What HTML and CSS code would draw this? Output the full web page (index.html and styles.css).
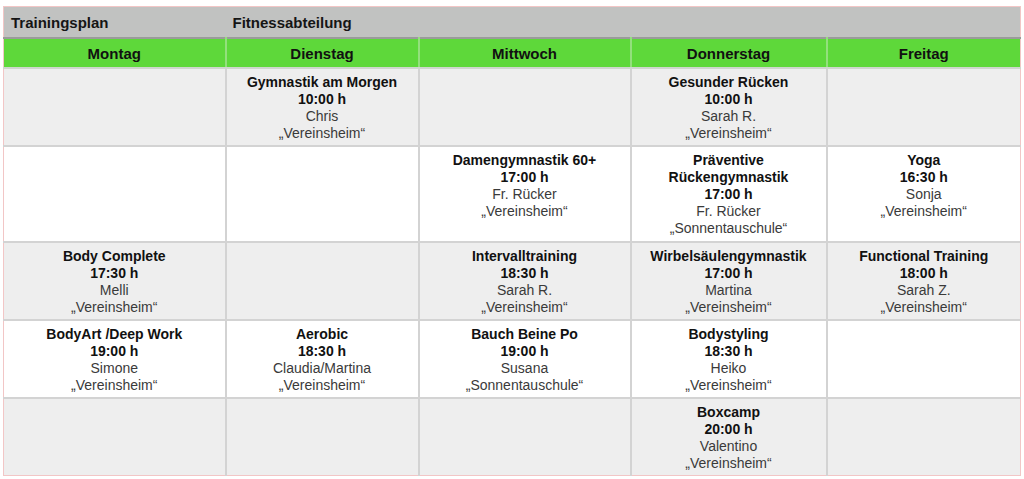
FILE: index.html
```html
<!DOCTYPE html>
<html lang="de">
<head>
<meta charset="utf-8">
<title>Trainingsplan Fitnessabteilung</title>
<link rel="stylesheet" href="styles.css">
</head>
<body>
<table class="plan">
  <colgroup>
    <col class="c1"><col class="c2"><col class="c3"><col class="c4"><col class="c5">
  </colgroup>
  <thead>
    <tr class="title-row">
      <th class="title">Trainingsplan</th>
      <th class="title" colspan="4">Fitnessabteilung</th>
    </tr>
    <tr class="days">
      <th>Montag</th><th>Dienstag</th><th>Mittwoch</th><th>Donnerstag</th><th>Freitag</th>
    </tr>
  </thead>
  <tbody>
    <tr class="shade">
      <td></td>
      <td><b>Gymnastik am Morgen</b><b>10:00 h</b><span>Chris</span><span>„Vereinsheim“</span></td>
      <td></td>
      <td><b>Gesunder Rücken</b><b>10:00 h</b><span>Sarah R.</span><span>„Vereinsheim“</span></td>
      <td></td>
    </tr>
    <tr class="tall">
      <td></td>
      <td></td>
      <td><b>Damengymnastik 60+</b><b>17:00 h</b><span>Fr. Rücker</span><span>„Vereinsheim“</span></td>
      <td><b>Präventive<br>Rückengymnastik</b><b>17:00 h</b><span>Fr. Rücker</span><span>„Sonnentauschule“</span></td>
      <td><b>Yoga</b><b>16:30 h</b><span>Sonja</span><span>„Vereinsheim“</span></td>
    </tr>
    <tr class="shade">
      <td><b>Body Complete</b><b>17:30 h</b><span>Melli</span><span>„Vereinsheim“</span></td>
      <td></td>
      <td><b>Intervalltraining</b><b>18:30 h</b><span>Sarah R.</span><span>„Vereinsheim“</span></td>
      <td><b>Wirbelsäulengymnastik</b><b>17:00 h</b><span>Martina</span><span>„Vereinsheim“</span></td>
      <td><b>Functional Training</b><b>18:00 h</b><span>Sarah Z.</span><span>„Vereinsheim“</span></td>
    </tr>
    <tr>
      <td><b>BodyArt /Deep Work</b><b>19:00 h</b><span>Simone</span><span>„Vereinsheim“</span></td>
      <td><b>Aerobic</b><b>18:30 h</b><span>Claudia/Martina</span><span>„Vereinsheim“</span></td>
      <td><b>Bauch Beine Po</b><b>19:00 h</b><span>Susana</span><span>„Sonnentauschule“</span></td>
      <td><b>Bodystyling</b><b>18:30 h</b><span>Heiko</span><span>„Vereinsheim“</span></td>
      <td></td>
    </tr>
    <tr class="shade">
      <td></td>
      <td></td>
      <td></td>
      <td><b>Boxcamp</b><b>20:00 h</b><span>Valentino</span><span>„Vereinsheim“</span></td>
      <td></td>
    </tr>
  </tbody>
</table>
</body>
</html>
```

FILE: styles.css
```css
html, body {
  margin: 0;
  padding: 0;
  background: #ffffff;
}

body {
  padding: 6px 0 0 3px;
  font-family: "Liberation Sans", Arial, sans-serif;
}

.plan {
  border-collapse: collapse;
  table-layout: fixed;
  width: 1017px;
  border: 1px solid #f2c6c6;
}

.c1 { width: 222px; }
.c2 { width: 193px; }
.c3 { width: 212px; }
.c4 { width: 196px; }
.c5 { width: 194px; }

.title-row {
  background: #c1c2c1;
  border-bottom: 2px solid #9a9b9a;
}

.title {
  height: 30px;
  padding: 0 7px;
  text-align: left;
  font-size: 15px;
  font-weight: bold;
  color: #151515;
  vertical-align: middle;
}

.days {
  background: #5ed83a;
}

.days th {
  height: 28px;
  padding: 0;
  font-size: 15px;
  font-weight: bold;
  color: #111;
  text-align: center;
  vertical-align: middle;
  border-left: 2px solid #93e07c;
  border-bottom: 2px solid #cfd6cd;
}

.days th:first-child {
  border-left: none;
}

tbody td {
  padding: 5px 4px 3px;
  text-align: center;
  vertical-align: top;
  font-size: 14px;
  line-height: 17px;
  color: #3a3a3a;
  border-left: 2px solid #d3d3d3;
  border-top: 2px solid #d3d3d3;
}

tbody tr.tall td {
  padding-bottom: 4px;
}

tbody td:first-child {
  border-left: none;
}

tbody tr {
  background: #ffffff;
}

tbody tr.shade {
  background: #eeeeee;
}

tbody td b,
tbody td span {
  display: block;
}

tbody td b {
  color: #111;
  font-weight: bold;
}
```
